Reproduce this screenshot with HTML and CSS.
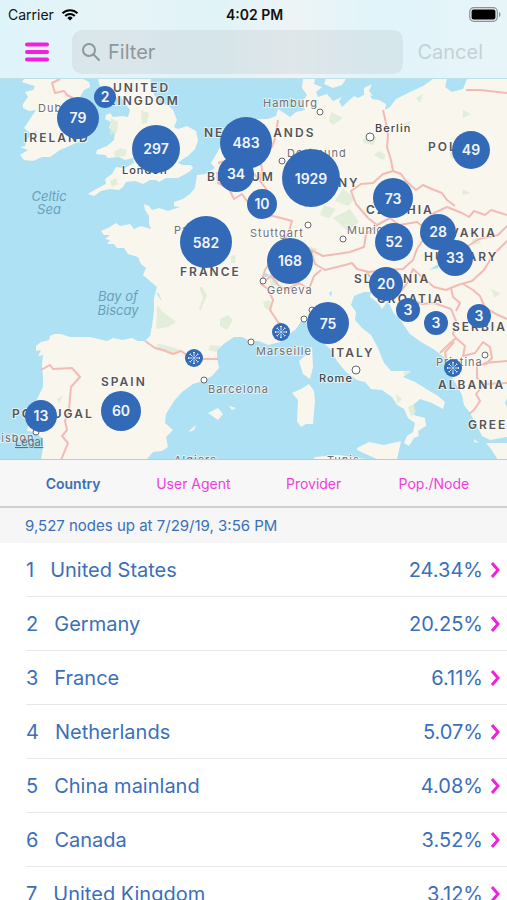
FILE: index.html
```
<!DOCTYPE html>
<html lang="en">
<head>
    <meta charset="UTF-8">
    <meta name="viewport" content="width=device-width, initial-scale=1.0">
    <title>Nodes by Country</title>
    <link rel="stylesheet" href="styles.css">
</head>
<body>
    <header class="topbar">
        <div class="status-bar">
            <div class="carrier">
                <span>Carrier</span>
                <svg class="wifi" viewBox="0 0 18 13" aria-hidden="true">
                    <path d="M1.5 5.2a10.7 10.7 0 0 1 15 0" />
                    <path d="M4.2 8a6.8 6.8 0 0 1 9.6 0" />
                    <path class="wifi-dot" d="M9 12.6 6.3 9.9a3.8 3.8 0 0 1 5.4 0z" />
                </svg>
            </div>
            <strong>4:02 PM</strong>
            <svg class="battery" viewBox="0 0 32 15" aria-hidden="true">
                <rect x="0.7" y="0.7" width="27.6" height="13.6" rx="4" fill="#e9eef0" stroke="#8e9496" stroke-width="1.2" />
                <rect x="2.6" y="2.6" width="23.8" height="9.8" rx="2" />
                <path d="M30 5c2 .6 2 4.400 0 5z" fill="#8e9496" />
            </svg>
        </div>
        <form class="search-row">
            <button type="button" class="menu-btn" aria-label="Menu">
                <svg viewBox="0 0 24 20" aria-hidden="true"><path d="M2 2.500h20M2 10h20M2 17.500h20" /></svg>
            </button>
            <label class="search-box">
                <svg viewBox="0 0 18 18" aria-hidden="true"><circle cx="7" cy="7" r="6" /><path d="m11.500 11.500 5.500 5.500" /></svg>
                <input type="text" placeholder="Filter" aria-label="Filter">
            </label>
            <button type="button" class="cancel-btn" disabled>Cancel</button>
        </form>
    </header>

    <!-- Map -->
    <section class="map">
        <svg viewBox="0 79 507 381" preserveAspectRatio="xMidYMin slice" role="img" aria-label="Map of nodes in Europe">
            <g class="land">
                <path d="M24 79 22 82 28 84 35 86 33 90 25 92 28 97 23 104 23 108 29 111 36 110 30 119 24 128 30 133 38 131 27 139 25 146 20 147 28 150 20 155 24 160 33 161 42 157 50 157 60 150 67 147 80 141 84 133 82 120 80 110 80 97 84 90 90 87 89 82 83 79z" />
                <path d="M98 79 100 86 106 91 112 98 120 96 125 103 130 110 128 117 122 116 113 117 110 113 106 115 105 119 111 122 109 128 115 132 114 140 107 146 97 150 96 154 105 155 108 158 119 157 125 160 133 158 134 163 125 168 116 167 112 174 105 179 106 184 98 188 91 192 88 194 94 196 101 191 110 189 119 190 123 187 126 182 135 181 143 184 150 180 156 180 159 182 166 178 178 178 189 172 193 168 191 165 183 165 178 163 183 159 188 156 195 149 198 141 196 131 187 126 178 129 174 127 177 120 173 110 168 105 159 103 154 94 150 86 151 79z" />
                <path d="M303 79 302 88 307 95 302 102 305 110 296 112 290 117 284 113 278 109 276 116 268 119 253 119 238 121 229 128 224 139 217 153 211 163 215 168 205 174 197 175 195 188 190 194 183 199 174 202 174 206 180 207 168 211 159 208 152 210 149 206 144 204 145 210 149 216 149 224 151 229 141 226 134 229 130 224 120 226 116 223 108 228 101 231 104 235 110 235 105 239 110 240 107 244 114 244 117 248 124 248 128 254 138 257 141 264 146 268 143 275 150 281 157 287 154 298 154 311 152 326 150 336 145 341 138 341 132 338 122 340 113 338 107 341 90 337 70 337 61 334 54 334 50 336 49 340 41 342 36 346 36 351 41 350 38 356 43 355 42 365 43 378 43 387 38 397 35 403 31 414 29 423 27 431 35 432 42 438 43 447 41 460 146 460 153 452 162 451 168 447 166 437 173 430 165 423 166 414 174 401 182 392 193 384 203 381 212 376 219 368 217 358 217 350 225 343 234 337 242 337 250 341 259 341 268 345 280 342 288 335 296 329 302 320 310 324 316 334 323 342 331 350 337 361 346 372 357 380 365 382 371 389 382 390 392 397 397 405 404 409 408 418 415 423 413 432 407 436 404 443 409 446 414 438 419 436 418 431 426 426 425 418 414 415 413 405 420 399 432 403 443 409 445 402 438 396 428 390 415 382 403 377 411 371 402 371 391 371 384 363 378 348 371 335 362 328 355 320 356 312 351 305 354 296 364 292 371 292 370 297 378 303 382 309 388 301 393 312 401 321 410 334 421 342 435 350 446 359 448 371 456 384 462 395 464 405 470 413 476 424 482 436 490 440 507 437 507 79 467 79 463 89 452 92 445 87 447 79 433 79 423 86 408 93 396 99 390 107 385 110 386 104 379 100 372 99 368 92 362 96 358 98 354 96 342 107 339 101 342 97 333 101 327 94 318 97 316 92 322 87 314 84 315 79z" />
                <path d="M326 79h20l-4 6-9 3-9-4zM364 88l8-4-3 7 4 5-9-2zM309 348l3-1 1 20-3 12-7-5-4-13 8-7zM309 384 314 391 315 401 313 424 306 424 301 427 297 421 298 400 292 393 301 389zM357 448 369 442 384 445 401 441 397 460H379L357 450zM208 413 218 408 223 414 218 420 211 415zM190 430l6-5-2 5-5 2zM229 406l7 2-4 2zM486 443 507 443V460H498L491 449zM474 439l5 4-5-1zM313 460l2-3 23-2 34 5z" />
            </g>
            <g class="woods">
                <path d="M111 118l7 4-1 10-7 3zM141 110l8 3-2 10-5 1zM114 152l7-4 6 2-2 6-10 1zM110 181l6-3 2 6-6 3zM157 305l6 7 13 10-8 5-12 2 1-18zM157 344l8 1 16 5-9 4-14-4zM202 287l5 8-6 15-2-1 4-11-4-11zM220 319l8-4 5 5-6 10-7-4zM211 345l9 1-4 6-8-2zM231 256l5-1-1 8h-4zM331 112l12 6-10 7-4-4zM362 139l15-2-4 8-9-2zM379 151l7 4-3 5-9-5zM343 188l12 11-7 7-13-5zM324 205l12 4-7 9-9-3zM303 194l10 7-8 7zM333 218l17-9 9 13-11 9zM403 124l8-3-3 8zM416 98l7-4-3 9zM463 110l8 4-8 4zM449 151l9 1-6 8zM463 189l7 4-8 2zM472 240l6-3 3 6-7 2zM304 245l14 4-9 6zM269 275l6-5 5 11-9 8zM263 302l7-2 2 12-7-4zM396 394l6 5-5 5zM408 407l6-3 2 8-5 5zM403 372l8-1-6 5zM57 399l6-4-4 9zM431 329l6 7-7-2zM454 360l6 4-4 6zM491 289l9 4-5 5z" />
            </g>
            <path class="lake" d="M429 270 440 263 438 268zM329 293l3-2-1 6zM265 273l5 2-6 3zM156 292l6 10-3-8zM507 398l-2 5 2 4z" />
            <g class="borders">
                <path d="M60 79 52 83 55 93 64 91 67 95 73 98" />
                <path d="M41 370 50 365 53 369 72 368 80 377 71 387 69 410 65 421 67 430 62 436 68 443 61 460" />
                <path d="M145 341 155 348 163 350 173 354 181 351 190 357 203 359 218 359" />
                <path d="M217 172 218 183 229 189 234 199 242 194 247 201 257 208 269 215 281 218 292 221 289 231 283 244 274 257 265 270 261 284 268 289 273 300 270 310 278 322 284 327 286 337" />
                <path d="M278 120 275 138 272 147 260 155 262 170 260 181 267 190 264 201 269 215M218 163 230 160 246 164 260 181" />
                <path d="M383 110 386 123 388 135 387 147 391 160 393 171 383 174 373 183 361 184 351 191 356 204 368 218 377 225 390 218 399 225 417 222 422 226 432 214 447 207 462 213 469 217 474 211 485 215 491 210 507 215" />
                <path d="M393 171 401 174 406 181 416 190 423 185 434 190 442 193 447 200 455 206" />
                <path d="M377 225 366 234 364 247 350 252 337 254 323 256 311 250 301 243 288 240" />
                <path d="M311 250 315 264 325 270 345 265 352 263 357 269 369 272 386 270 403 269 413 260 417 249 423 240 447 244 465 248 479 239 498 235 507 226" />
                <path d="M261 284 271 276 278 285 286 290 299 283 309 289 314 276 321 270" />
                <path d="M366 272 373 280 371 292 382 294 393 289 402 290 407 283 413 269 422 277 434 287 446 290 458 285 472 281 484 270 493 255 507 241" />
                <path d="M398 302 412 300 422 304 434 303 451 309 456 321 453 334 456 338 447 346 440 353" />
                <path d="M451 288 453 297 460 303 456 311M456 338 465 346 463 356 475 353 483 342 490 347 492 358 486 364 477 365 477 378 484 384 476 394 480 401 474 410 469 414" />
                <path d="M463 284 473 290 480 296 485 308 496 314 507 319M484 384 507 383M484 363 507 361M454 342 445 352 447 364M466 90 480 90 507 93" />
            </g>
            <g class="labels country">
                <text x="113" y="92">UNITED</text>
                <text x="107" y="105">KINGDOM</text>
                <text x="24" y="142">IRELAND</text>
                <text x="204" y="137">NETHERLANDS</text>
                <text x="207" y="181">BELGIUM</text>
                <text x="284" y="187">GERMANY</text>
                <text x="428" y="151">POLAND</text>
                <text x="366" y="214">CZECHIA</text>
                <text x="421" y="237">SLOVAKIA</text>
                <text x="424" y="261">HUNGARY</text>
                <text x="180" y="276">FRANCE</text>
                <text x="354" y="283">SLOVENIA</text>
                <text x="377" y="303">CROATIA</text>
                <text x="452" y="331">SERBIA</text>
                <text x="331" y="357">ITALY</text>
                <text x="101" y="386">SPAIN</text>
                <text x="12" y="418">PORTUGAL</text>
                <text x="438" y="389">ALBANIA</text>
                <text x="468" y="429">GREECE</text>
            </g>
            <g class="labels city">
                <text x="38" y="112">Dublin</text>
                <text x="122" y="174" class="capital">London</text>
                <text x="263" y="107">Hamburg</text>
                <text x="375" y="132" class="capital">Berlin</text>
                <text x="287" y="157">Dortmund</text>
                <text x="250" y="237">Stuttgart</text>
                <text x="347" y="234">Munich</text>
                <text x="174" y="234">Paris</text>
                <text x="267" y="294">Geneva</text>
                <text x="256" y="355">Marseille</text>
                <text x="319" y="382" class="capital">Rome</text>
                <text x="208" y="393">Barcelona</text>
                <text x="436" y="366">Pristina</text>
                <text x="-6" y="442">Lisbon</text>
                <text x="174" y="464">Algiers</text>
                <text x="327" y="464">Tunis</text>
            </g>
            <g class="labels sea">
                <text x="49" y="201">Celtic</text>
                <text x="49" y="214">Sea</text>
                <text x="118" y="301">Bay of</text>
                <text x="118" y="315">Biscay</text>
            </g>
            <g class="dots">
                <circle cx="320" cy="112" r="3" />
                <circle cx="370" cy="137" r="4" />
                <circle cx="282" cy="161" r="3" />
                <circle cx="308" cy="225" r="3" />
                <circle cx="343" cy="239" r="3" />
                <circle cx="263" cy="281" r="3" />
                <circle cx="312" cy="310" r="3" />
                <circle cx="304" cy="319" r="3" />
                <circle cx="251" cy="342" r="3" />
                <circle cx="204" cy="380" r="3" />
                <circle cx="356" cy="370" r="4" />
                <circle cx="485" cy="355" r="3" />
                <circle cx="36" cy="432" r="3" />
            </g>
            <a class="legal" href="#legal"><text x="15" y="446">Legal</text></a>
            <!-- Node clusters -->
            <g class="pins">
                <circle cx="105" cy="97" r="11" /><text x="105" y="102">2</text>
                <circle cx="78" cy="118" r="21" /><text x="78" y="123">79</text>
                <circle cx="156" cy="149" r="24" /><text x="156" y="154">297</text>
                <circle cx="236" cy="174" r="18" /><text x="236" y="179">34</text>
                <circle cx="246" cy="143" r="26" /><text x="246" y="148">483</text>
                <circle cx="311" cy="178" r="29" /><text x="311" y="184">1929</text>
                <circle cx="262" cy="204" r="15" /><text x="262" y="209">10</text>
                <circle cx="471" cy="150" r="19" /><text x="471" y="155">49</text>
                <circle cx="393" cy="198" r="20" /><text x="393" y="204">73</text>
                <circle cx="206" cy="242" r="26" /><text x="206" y="248">582</text>
                <circle cx="394" cy="242" r="19" /><text x="394" y="247">52</text>
                <circle cx="438" cy="232" r="18" /><text x="438" y="237">28</text>
                <circle cx="455" cy="258" r="18" /><text x="455" y="263">33</text>
                <circle cx="290" cy="261" r="23" /><text x="290" y="266">168</text>
                <circle cx="386" cy="284" r="17" /><text x="386" y="289">20</text>
                <circle cx="408" cy="310" r="12" /><text x="408" y="315">3</text>
                <circle cx="436" cy="323" r="12" /><text x="436" y="328">3</text>
                <circle cx="479" cy="316" r="12" /><text x="479" y="321">3</text>
                <circle cx="328" cy="323" r="21" /><text x="328" y="329">75</text>
                <circle cx="121" cy="411" r="20" /><text x="121" y="416">60</text>
                <circle cx="41" cy="416" r="16" /><text x="41" y="421">13</text>
                <circle cx="194" cy="358" r="9" />
                <circle cx="281" cy="332" r="9" />
                <circle cx="453" cy="368" r="9" />
            </g>
            <defs>
                <g id="node-star">
                    <path d="M0-2V-5.500M0 2V5.500M-2 0H-5.500M2 0H5.500M-1.400-1.400-3.900-3.900M1.400 1.400 3.900 3.900M1.400-1.400 3.900-3.900M-1.400 1.400-3.900 3.900" />
                    <path d="M-1-5.500H1M-1 5.500H1M-5.500-1V1M5.500-1V1M-4.500-3.300-3.300-4.500M4.500 3.300 3.300 4.500M4.500-3.300 3.300-4.500M-4.500 3.300-3.300 4.500" />
                    <circle r="1" />
                </g>
            </defs>
            <g class="stars">
                <use href="#node-star" x="194" y="358" />
                <use href="#node-star" x="281" y="332" />
                <use href="#node-star" x="453" y="368" />
            </g>
        </svg>
    </section>

    <nav class="tabs">
        <button type="button" class="tab active">Country</button>
        <button type="button" class="tab">User Agent</button>
        <button type="button" class="tab">Provider</button>
        <button type="button" class="tab">Pop./Node</button>
    </nav>

    <main class="results">
        <p class="summary">9,527 nodes up at 7/29/19, 3:56 PM</p>
        <ul class="rows">
            <li><a href="#us"><span>1</span><span class="name">United States</span><span>24.34%</span><svg class="chevron" viewBox="0 0 10 18"><path d="m2 2 6 7-6 7" /></svg></a></li>
            <li><a href="#de"><span>2</span><span class="name">Germany</span><span>20.25%</span><svg class="chevron" viewBox="0 0 10 18"><path d="m2 2 6 7-6 7" /></svg></a></li>
            <li><a href="#fr"><span>3</span><span class="name">France</span><span>6.11%</span><svg class="chevron" viewBox="0 0 10 18"><path d="m2 2 6 7-6 7" /></svg></a></li>
            <li><a href="#nl"><span>4</span><span class="name">Netherlands</span><span>5.07%</span><svg class="chevron" viewBox="0 0 10 18"><path d="m2 2 6 7-6 7" /></svg></a></li>
            <li><a href="#cn"><span>5</span><span class="name">China mainland</span><span>4.08%</span><svg class="chevron" viewBox="0 0 10 18"><path d="m2 2 6 7-6 7" /></svg></a></li>
            <li><a href="#ca"><span>6</span><span class="name">Canada</span><span>3.52%</span><svg class="chevron" viewBox="0 0 10 18"><path d="m2 2 6 7-6 7" /></svg></a></li>
            <li><a href="#gb"><span>7</span><span class="name">United Kingdom</span><span>3.12%</span><svg class="chevron" viewBox="0 0 10 18"><path d="m2 2 6 7-6 7" /></svg></a></li>
        </ul>
    </main>
</body>
</html>
```
FILE: styles.css
```
* {
    box-sizing: border-box;
}
body {
    margin: 0;
    height: 100vh;
    display: flex;
    flex-direction: column;
    overflow: hidden;
    font-family: Inter, "Liberation Sans", sans-serif;
    background: white;
    color: #3b6fb9;
}
button {
    border: none;
    background: none;
    padding: 0;
    font: inherit;
    cursor: pointer;
}

/* Top bar */
.topbar {
    flex: none;
    background: linear-gradient(90deg, #def4fb 0%, #e7f4f7 22%, #e0f3f7 42%, #edf4f6 58%, #e0f4fa 75%, #e8f5f8 100%);
    border-bottom: 1px solid #bddfe6;
}
.status-bar {
    display: grid;
    grid-template-columns: 1fr auto 1fr;
    align-items: center;
    height: 28px;
    padding: 0 6px 0 8px;
    font-size: 14px;
    color: #111;
}
.status-bar strong {
    font-weight: 600;
}
.carrier {
    display: flex;
    align-items: center;
    gap: 7px;
}
.wifi {
    width: 18px;
    height: 13px;
    fill: none;
    stroke: #000;
    stroke-width: 2;
}
.wifi .wifi-dot {
    fill: #000;
    stroke: none;
}
.battery {
    width: 32px;
    height: 15px;
    justify-self: end;
}
.search-row {
    display: flex;
    align-items: center;
    margin: 0;
    padding: 2px 24px 4px 25px;
    font-size: 20px;
}
.menu-btn {
    width: 24px;
    height: 20px;
    margin-right: 23px;
}
.menu-btn svg {
    display: block;
    fill: none;
    stroke: #f020dc;
    stroke-width: 4;
    stroke-linecap: round;
}
.search-box {
    flex: 1;
    display: flex;
    align-items: center;
    gap: 8px;
    min-width: 0;
    height: 44px;
    padding: 0 10px;
    border-radius: 10px;
    background: rgba(142, 142, 147, 0.13);
}
.search-box svg {
    flex: none;
    width: 18px;
    height: 18px;
    fill: none;
    stroke: #8f979b;
    stroke-width: 2;
    stroke-linecap: round;
}
.search-box input {
    flex: 1;
    min-width: 0;
    padding: 0;
    border: none;
    outline: none;
    background: none;
    font: inherit;
    color: #333;
}
.search-box input::placeholder {
    color: #8f979b;
}
.cancel-btn {
    margin-left: 14px;
    color: #c5d1d5;
    cursor: default;
}

/* Map */
.map {
    flex: none;
    height: 381px;
    border-bottom: 1px solid #c4c8c9;
    background: #aee1f4;
}
.map svg {
    display: block;
    width: 100%;
    height: 100%;
}
.land {
    fill: #f9f6ee;
}
.woods {
    fill: #dcebd5;
    opacity: 0.8;
}
.lake {
    fill: #aee1f4;
}
.borders {
    fill: none;
    stroke: #f3bbb5;
    stroke-width: 2;
    stroke-linejoin: round;
}
.labels {
    paint-order: stroke;
    stroke: rgba(255, 255, 255, 0.6);
    stroke-width: 2px;
}
.country {
    font-size: 12px;
    font-weight: 600;
    letter-spacing: 2px;
    fill: #555;
}
.city {
    font-size: 11px;
    letter-spacing: 1px;
    fill: #707070;
}
.city .capital {
    font-weight: 500;
    fill: #444;
}
.sea {
    font-size: 13px;
    font-style: italic;
    text-anchor: middle;
    stroke: none;
    fill: #6a9fb8;
}
.dots {
    fill: white;
    stroke: #666;
    stroke-width: 1px;
}
.legal {
    font-size: 11px;
    fill: #5d7079;
    text-decoration: underline;
}
.pins circle {
    fill: #326ab8;
}
.pins text {
    font-size: 14px;
    font-weight: 600;
    text-anchor: middle;
    fill: #f2f6fb;
}
.stars {
    fill: none;
    stroke: #dbe8f7;
    stroke-width: 1px;
}

/* Tabs */
.tabs {
    flex: none;
    display: grid;
    grid-template-columns: repeat(4, 1fr);
    height: 48px;
    padding: 0 13px;
    background: #f7f7f7;
    border-bottom: 2px solid #cfcfcf;
}
.tab {
    font-size: 14px;
    color: #ee3fdd;
}
.tab.active {
    font-weight: 600;
    color: #3b6fb9;
}

/* Results */
.results {
    flex: 1;
    min-height: 0;
    overflow-y: auto;
    scrollbar-width: none;
}
.summary {
    margin: 0;
    padding: 0 25px;
    line-height: 35px;
    font-size: 15px;
    background: #f6f6f6;
}
.rows {
    list-style: none;
    margin: 0;
    padding: 0 0 0 26px;
}
.rows li {
    border-bottom: 1px solid #e8e8ea;
}
.rows a {
    display: flex;
    align-items: center;
    height: 53px;
    padding-right: 7px;
    font-size: 20px;
    color: inherit;
    text-decoration: none;
}
.name {
    flex: 1;
    margin-left: 16px;
}
.chevron {
    width: 10px;
    height: 18px;
    margin-left: 7px;
    fill: none;
    stroke: #f020dc;
    stroke-width: 3;
}
```
